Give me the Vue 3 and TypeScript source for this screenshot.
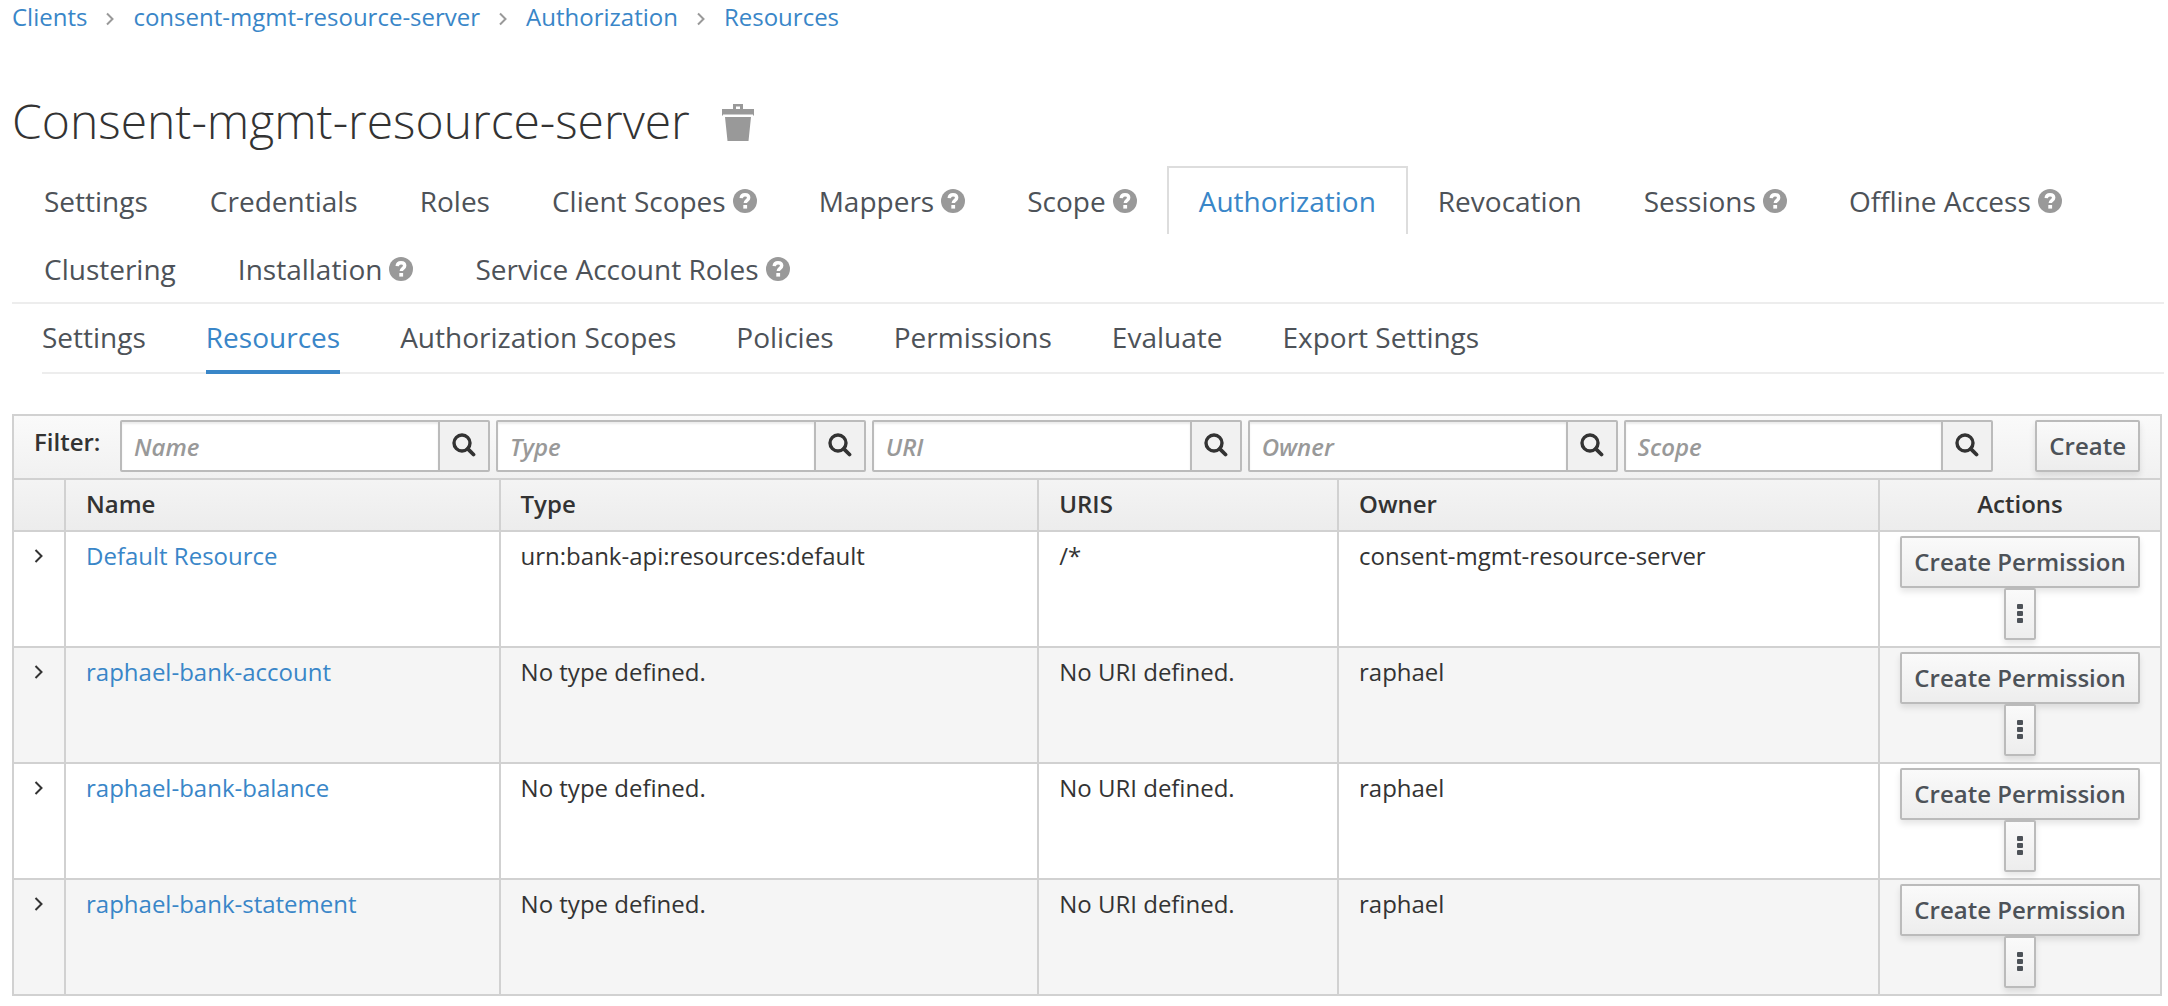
<script setup lang="ts">
interface Tab {
  label: string
  help?: boolean
  active?: boolean
}

interface Resource {
  name: string
  type: string
  uris: string
  owner: string
}

const crumbs: string[] = ['Clients', 'consent-mgmt-resource-server', 'Authorization', 'Resources']

const tabs: Tab[] = [
  { label: 'Settings' },
  { label: 'Credentials' },
  { label: 'Roles' },
  { label: 'Client Scopes', help: true },
  { label: 'Mappers', help: true },
  { label: 'Scope', help: true },
  { label: 'Authorization', active: true },
  { label: 'Revocation' },
  { label: 'Sessions', help: true },
  { label: 'Offline Access', help: true },
  { label: 'Clustering' },
  { label: 'Installation', help: true },
  { label: 'Service Account Roles', help: true },
]

const subTabs: Tab[] = [
  { label: 'Settings' },
  { label: 'Resources', active: true },
  { label: 'Authorization Scopes' },
  { label: 'Policies' },
  { label: 'Permissions' },
  { label: 'Evaluate' },
  { label: 'Export Settings' },
]

const filters: string[] = ['Name', 'Type', 'URI', 'Owner', 'Scope']

const resources: Resource[] = [
  { name: 'Default Resource', type: 'urn:bank-api:resources:default', uris: '/*', owner: 'consent-mgmt-resource-server' },
  { name: 'raphael-bank-account', type: 'No type defined.', uris: 'No URI defined.', owner: 'raphael' },
  { name: 'raphael-bank-balance', type: 'No type defined.', uris: 'No URI defined.', owner: 'raphael' },
  { name: 'raphael-bank-statement', type: 'No type defined.', uris: 'No URI defined.', owner: 'raphael' },
]
</script>

<template>
  <main class="page">
    <nav aria-label="Breadcrumb">
      <ol class="breadcrumb">
        <li v-for="(crumb, i) in crumbs" :key="crumb">
          <svg v-if="i > 0" class="crumb-arrow" viewBox="0 0 10 14" aria-hidden="true">
            <path d="M2 1.5 7.5 7 2 12.5" fill="none" stroke="#999" stroke-width="2" />
          </svg>
          <a href="#">{{ crumb }}</a>
        </li>
      </ol>
    </nav>

    <header class="heading">
      <h1>Consent-mgmt-resource-server</h1>
      <button type="button" class="trash" aria-label="Delete client">
        <svg viewBox="0 0 32 38" aria-hidden="true">
          <path fill="#999" fill-rule="evenodd" d="M11 0h10v5h11v6l-1 1v-1.500H1V12l-1-1V5h11zM14 2.500V5h4V2.500zM3 13h26l-2.500 24h-21z" />
        </svg>
      </button>
    </header>

    <nav aria-label="Client">
      <ul class="tabs">
        <li v-for="tab in tabs" :key="tab.label">
          <a href="#" :class="{ active: tab.active }">
            {{ tab.label }}
            <svg v-if="tab.help" class="help" viewBox="0 0 24 24" aria-hidden="true">
              <circle cx="12" cy="12" r="12" fill="#999" />
              <path d="M8.200 9.100C8.400 6.900 10 5.800 12 5.800c2.200 0 3.700 1.200 3.700 3 0 2.600-3.400 2.600-3.400 5.200" fill="none" stroke="#fff" stroke-width="3.400" />
              <path d="M10.300 16h3.800v3.600h-3.800z" fill="#fff" />
            </svg>
          </a>
        </li>
      </ul>
    </nav>

    <nav aria-label="Authorization">
      <ul class="subtabs">
        <li v-for="tab in subTabs" :key="tab.label">
          <a href="#" :class="{ active: tab.active }">{{ tab.label }}</a>
        </li>
      </ul>
    </nav>

    <section class="resources">
      <form class="toolbar" @submit.prevent>
        <span class="filter-title">Filter:</span>
        <div class="filters">
          <div v-for="name in filters" :key="name" class="filter">
            <input type="text" :placeholder="name" :aria-label="name" />
            <button type="button" :aria-label="'Search by ' + name">
              <svg viewBox="0 0 24 24" aria-hidden="true">
                <circle cx="10" cy="10" r="8" fill="none" stroke="#333" stroke-width="3.400" />
                <path d="M15.800 15.800 21.500 21.500" stroke="#333" stroke-width="3.800" stroke-linecap="round" />
              </svg>
            </button>
          </div>
        </div>
        <button type="button" class="btn">Create</button>
      </form>

      <table>
        <colgroup>
          <col class="col-toggle" />
          <col class="col-name" />
          <col class="col-type" />
          <col class="col-uris" />
          <col class="col-owner" />
          <col class="col-actions" />
        </colgroup>
        <thead>
          <tr>
            <th></th>
            <th>Name</th>
            <th>Type</th>
            <th>URIS</th>
            <th>Owner</th>
            <th class="centered">Actions</th>
          </tr>
        </thead>
        <tbody>
          <tr v-for="item in resources" :key="item.name">
            <td>
              <button type="button" class="toggle" :aria-label="'Expand ' + item.name">
                <svg viewBox="0 0 10 14" aria-hidden="true">
                  <path d="M1.500 1 7.500 7l-6 6" fill="none" stroke="#333" stroke-width="2" />
                </svg>
              </button>
            </td>
            <td><a href="#">{{ item.name }}</a></td>
            <td>{{ item.type }}</td>
            <td>{{ item.uris }}</td>
            <td>{{ item.owner }}</td>
            <td>
              <div class="actions">
                <button type="button" class="btn">Create Permission</button>
                <button type="button" class="btn kebab" aria-label="More actions">
                  <svg viewBox="0 0 6 20" aria-hidden="true">
                    <rect x="0" y="0" width="6" height="5" rx="1" fill="#4d5258" />
                    <rect x="0" y="7" width="6" height="5" rx="1" fill="#4d5258" />
                    <rect x="0" y="14" width="6" height="5" rx="1" fill="#4d5258" />
                  </svg>
                </button>
              </div>
            </td>
          </tr>
        </tbody>
      </table>
    </section>
  </main>
</template>

<style>
body {
  background: #fff;
}
</style>

<style scoped>
* {
  box-sizing: border-box;
}

.page {
  padding: 0 4px 10px 12px;
  color: #333;
  font-family: "Open Sans", "Noto Sans", sans-serif;
  font-size: 24px;
  line-height: 40px;
}

a {
  color: #3986c8;
  text-decoration: none;
}

ul,
ol {
  margin: 0;
  padding: 0;
  list-style: none;
}

button,
input {
  margin: 0;
  font: inherit;
}

svg {
  display: block;
}

.breadcrumb {
  display: flex;
  line-height: 34px;
}

.breadcrumb li {
  display: flex;
  align-items: center;
}

.crumb-arrow {
  width: 10px;
  height: 14px;
  margin: 4px 18px 0;
}

.heading {
  display: flex;
  align-items: center;
  gap: 32px;
  margin: 54px 0 12px;
}

h1 {
  margin: 0;
  font-size: 48px;
  font-weight: 300;
  line-height: 66px;
}

.trash {
  padding: 4px 0 0;
  border: 0;
  background: none;
}

.trash svg {
  width: 32px;
  height: 38px;
}

.tabs {
  display: flex;
  flex-wrap: wrap;
  border-bottom: 2px solid #ededed;
  font-size: 28px;
  line-height: 66px;
}

.tabs li {
  margin-right: -2px;
}

.tabs a {
  display: flex;
  align-items: center;
  gap: 7px;
  padding: 0 30px;
  border: 2px solid transparent;
  border-bottom: 0;
  color: #4d5258;
}

.tabs a.active {
  border-color: #ddd;
  color: #3986c8;
}

.help {
  width: 24px;
  height: 24px;
}

.subtabs {
  display: flex;
  gap: 60px;
  margin-left: 30px;
  border-bottom: 2px solid #ededed;
  font-size: 28px;
  line-height: 66px;
}

.subtabs a {
  display: block;
  margin-bottom: -2px;
  border-bottom: 4px solid transparent;
  color: #4d5258;
}

.subtabs a.active {
  border-color: #3986c8;
  color: #3986c8;
}

.resources {
  margin: 40px 2px 0 0;
  border: 2px solid #d1d1d1;
  border-bottom: 0;
}

.toolbar {
  display: flex;
  align-items: flex-start;
  padding: 4px 20px 6px;
  background: linear-gradient(#fafafa, #f1f1f1);
}

.filter-title {
  flex: none;
  width: 86px;
  padding-top: 2px;
  font-weight: 600;
}

.filters {
  display: flex;
  flex: 1;
  gap: 6px;
  min-width: 0;
  margin-right: 42px;
}

.filter {
  display: flex;
  flex: 1;
  min-width: 0;
  height: 52px;
  border: 2px solid #bbb;
  border-radius: 2px;
}

.filter input {
  flex: 1;
  min-width: 0;
  padding: 2px 12px 0;
  border: 0;
  background: #fff;
  box-shadow: inset 0 2px 2px rgba(0, 0, 0, 0.08);
  color: #333;
}

.filter input::placeholder {
  color: #999;
  font-style: italic;
  font-weight: 600;
  opacity: 1;
}

.filter button {
  width: 50px;
  padding: 0 0 2px 12px;
  border: 0;
  border-left: 2px solid #bbb;
  background: #f1f1f1;
}

.filter button svg {
  width: 24px;
  height: 24px;
}

.btn {
  flex: none;
  height: 52px;
  padding: 4px 12px;
  border: 2px solid #bbb;
  border-radius: 2px;
  background: linear-gradient(#fafafa, #ededed);
  box-shadow: 0 4px 6px rgba(3, 3, 3, 0.1);
  color: #4d5258;
  font-weight: 600;
  white-space: nowrap;
}

table {
  width: 100%;
  border-spacing: 0;
  border-top: 2px solid #d1d1d1;
  table-layout: fixed;
}

.col-toggle {
  width: 50px;
}

.col-name {
  width: 20.25%;
}

.col-type {
  width: 25.1%;
}

.col-uris {
  width: 13.97%;
}

.col-actions {
  width: 282px;
}

thead {
  background: linear-gradient(#f4f4f4, #ececec);
}

th,
td {
  padding: 4px 20px 6px;
  border-bottom: 2px solid #d1d1d1;
  border-left: 2px solid #d1d1d1;
  text-align: left;
  vertical-align: top;
}

th:first-child,
td:first-child {
  padding-left: 20px;
  padding-right: 0;
  border-left: 0;
}

th {
  height: 52px;
  font-weight: 600;
}

th.centered {
  text-align: center;
}

tbody tr:nth-child(even) {
  background: #f5f5f5;
}

.toggle {
  display: flex;
  align-items: center;
  width: 30px;
  height: 40px;
  padding: 0;
  border: 0;
  background: none;
}

.toggle svg {
  width: 10px;
  height: 14px;
}

.actions {
  display: flex;
  flex-direction: column;
  align-items: center;
}

.kebab {
  padding: 0 11px;
}

.kebab svg {
  width: 6px;
  height: 20px;
}
</style>
